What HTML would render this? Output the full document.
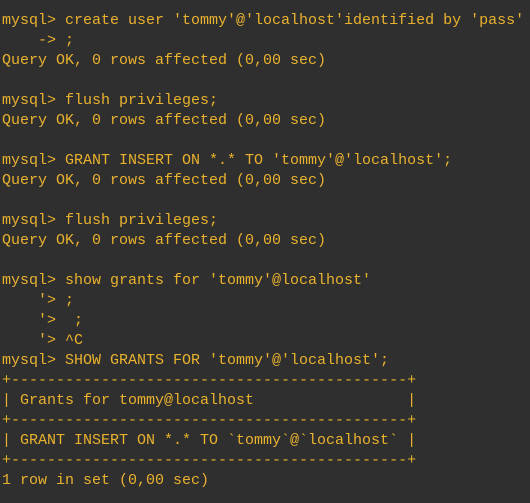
<!DOCTYPE html>
<html><head><meta charset="utf-8"><style>
html,body{margin:0;padding:0;background:#2f2f2f;width:530px;height:503px;overflow:hidden}
pre{margin:0;padding:11px 0 0 2px;font-family:"Liberation Mono",monospace;font-size:15px;line-height:20px;color:#e9b22e;white-space:pre}
</style></head><body><pre>mysql&gt; create user 'tommy'@'localhost'identified by 'pass'
    -&gt; ;
Query OK, 0 rows affected (0,00 sec)

mysql&gt; flush privileges;
Query OK, 0 rows affected (0,00 sec)

mysql&gt; GRANT INSERT ON *.* TO 'tommy'@'localhost';
Query OK, 0 rows affected (0,00 sec)

mysql&gt; flush privileges;
Query OK, 0 rows affected (0,00 sec)

mysql&gt; show grants for 'tommy'@localhost'
    '&gt; ;
    '&gt;  ;
    '&gt; ^C
mysql&gt; SHOW GRANTS FOR 'tommy'@'localhost';
+--------------------------------------------+
| Grants for tommy@localhost                 |
+--------------------------------------------+
| GRANT INSERT ON *.* TO `tommy`@`localhost` |
+--------------------------------------------+
1 row in set (0,00 sec)
</pre></body></html>
